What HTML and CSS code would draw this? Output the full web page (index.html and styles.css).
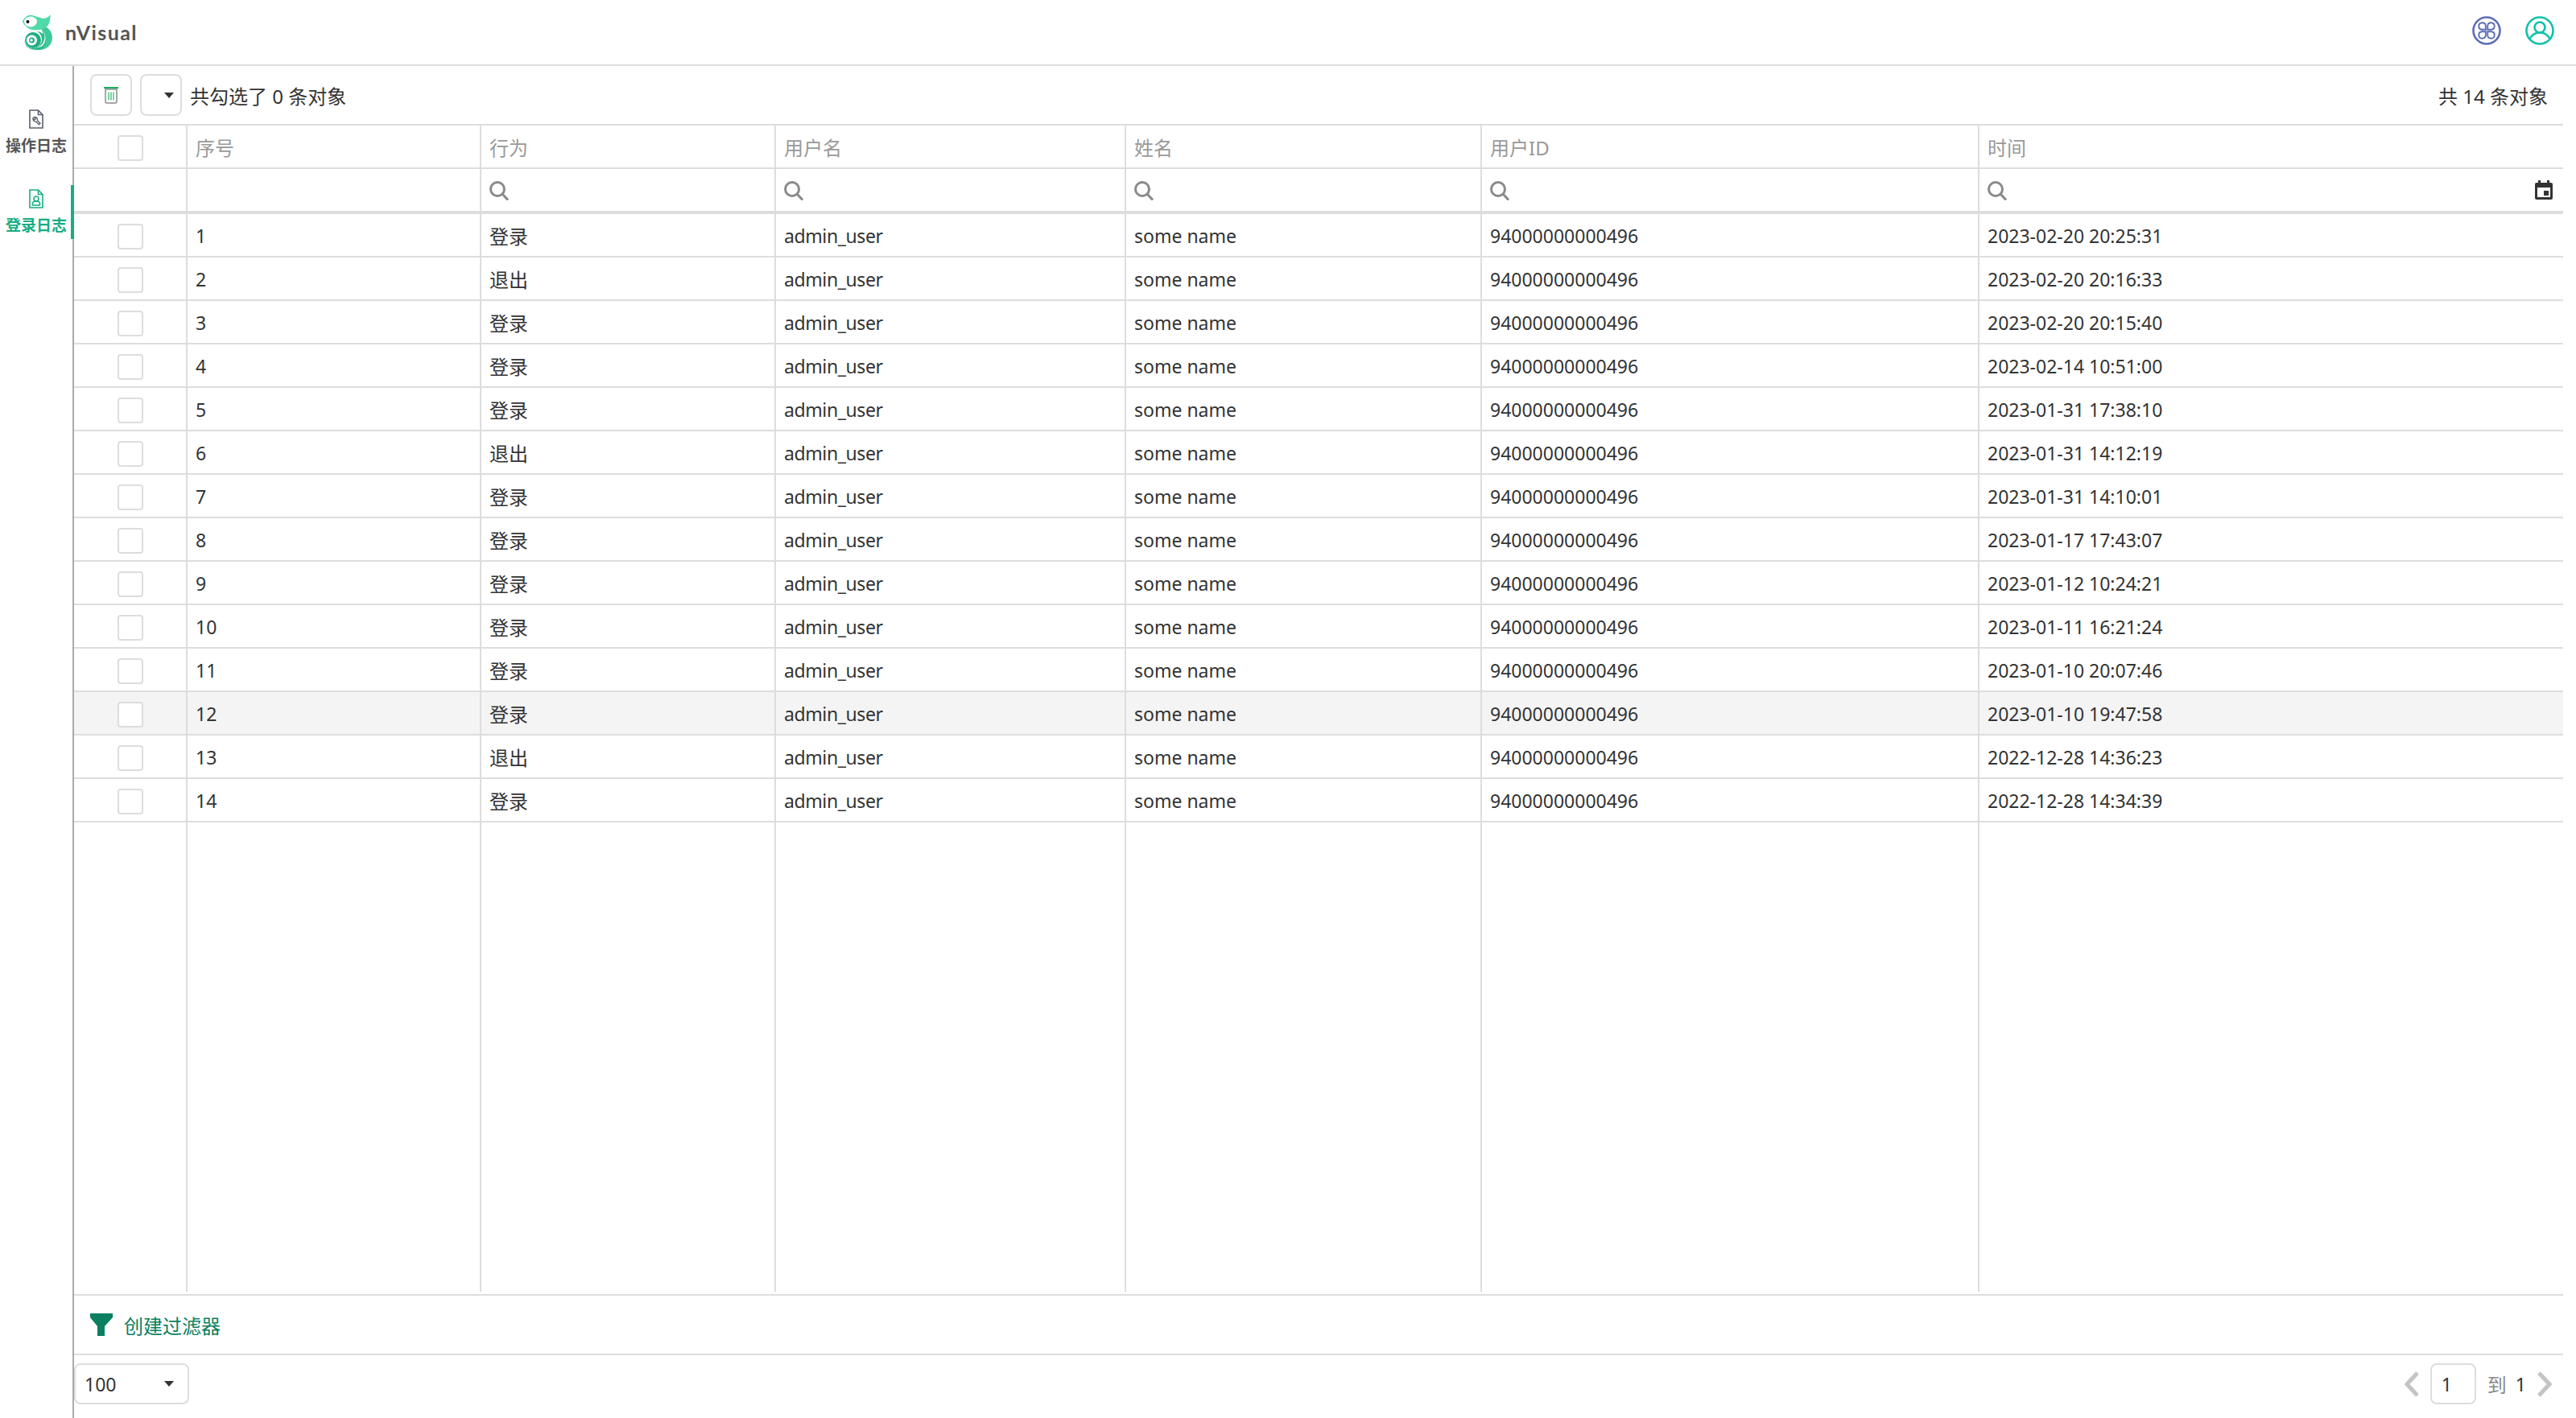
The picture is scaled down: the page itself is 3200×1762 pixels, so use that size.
FILE: index.html
```html
<!DOCTYPE html>
<html lang="zh-CN">
<head>
<meta charset="utf-8">
<title>nVisual</title>
<link rel="stylesheet" href="styles.css">
</head>
<body>
<svg class="defs" width="0" height="0" aria-hidden="true">
  <symbol id="search" viewBox="0 0 24 24">
    <circle cx="10" cy="10" r="8.500" fill="none" stroke="currentColor" stroke-width="3"/>
    <path d="M16 16 23 23.500" fill="none" stroke="currentColor" stroke-width="3"/>
  </symbol>
  <symbol id="caret" viewBox="0 0 12 7">
    <path d="M0 0h12L6 7z" fill="currentColor"/>
  </symbol>
</svg>
<div class="app">
  <header class="topbar">
    <div class="brand">
      <svg class="logo" viewBox="0 0 38 44" width="38" height="44">
        <path d="M22 14c9-1 16 6 16 15 0 9-8 15-16 15-5 0-9-1-12-4 9 2 17-3 17-11 0-6-2-11-5-15z" fill="#3ec99b"/>
        <path d="M22 44c-8 0-14-1-17-6-3-5-2-12 3-15 5-3 12-3 17 0 4 3 6 9 4 14-1 3-4 6-7 7z" fill="#27b98a"/>
        <path d="M27 21c2 4 2 9 0 13-2 4-5 6-8 7 5 0 9-3 10-8 1-4 0-9-2-12z" fill="#fff"/>
        <circle cx="14" cy="31" r="11" fill="#fff"/>
        <circle cx="14" cy="32" r="10" fill="#1fae85"/>
        <circle cx="12.500" cy="32" r="6.500" fill="#fff"/>
        <circle cx="12.500" cy="32" r="3.500" fill="#1fae85"/>
        <circle cx="12" cy="32" r="1.800" fill="#fff"/>
        <path d="M1 9C3 3 8 0 13 1c5 1 9 3 13 4 3 0 7-1 10-5-1 6-1 10-3 13-3 4-8 6-13 6-8 1-14-1-19-10z" fill="#4edba9"/>
        <ellipse cx="11" cy="9" rx="8" ry="6.500" fill="#fff"/>
        <circle cx="7.500" cy="9" r="2" fill="#111"/>
      </svg>
      <span class="brand-name">nVisual</span>
    </div>
    <div class="top-actions">
      <svg class="top-icon" viewBox="0 0 36 36" width="36" height="36">
        <circle cx="18" cy="18" r="16.500" fill="none" stroke="#5d6db5" stroke-width="2.600"/>
        <g fill="none" stroke="#5d6db5" stroke-width="1.900">
          <path d="M16.800 16.800h-5a4.300 4.300 0 1 1 5-5z"/>
          <path d="M19.200 16.800h5a4.300 4.300 0 1 0-5-5z"/>
          <path d="M16.800 19.200h-5a4.300 4.300 0 1 0 5 5z"/>
          <path d="M19.200 19.200h5a4.300 4.300 0 1 1-5 5z"/>
        </g>
      </svg>
      <svg class="top-icon" viewBox="0 0 36 36" width="36" height="36">
        <circle cx="18" cy="18" r="16.500" fill="none" stroke="#10c2a9" stroke-width="2.600"/>
        <circle cx="18" cy="14" r="6.500" fill="none" stroke="#10c2a9" stroke-width="2.600"/>
        <path d="M5 29c3-6 8-8.500 13-8.500S28 23 31 29" fill="none" stroke="#10c2a9" stroke-width="2.600"/>
      </svg>
    </div>
  </header>
  <div class="main">
    <nav class="sidebar">
      <a class="nav-item">
        <svg viewBox="0 0 18 24" width="18" height="24">
          <path d="M1 1h10.500L17 6.500V23H1z M11.500 1v5.500H17" fill="none" stroke="#5b5f6b" stroke-width="1.600"/>
          <path d="M6 9.500a3.500 3.500 0 0 1 4.500 4.200l3.500 3.500-1.600 1.600-3.500-3.500A3.500 3.500 0 0 1 5 11l2 2 1.500-1.500z" fill="none" stroke="#5b5f6b" stroke-width="1.300"/>
        </svg>
        <span>操作日志</span>
      </a>
      <a class="nav-item active">
        <svg viewBox="0 0 18 24" width="18" height="24">
          <path d="M1 1h10.500L17 6.500V23H1z M11.500 1v5.500H17" fill="none" stroke="#17ad83" stroke-width="1.600"/>
          <circle cx="9" cy="12" r="3" fill="none" stroke="#17ad83" stroke-width="1.500"/>
          <path d="M4.500 20v-2c0-2 2-3 4.500-3s4.500 1 4.500 3v2z" fill="none" stroke="#17ad83" stroke-width="1.500"/>
        </svg>
        <span>登录日志</span>
      </a>
    </nav>
    <section class="content">
      <div class="toolbar">
        <div class="toolbar-left">
          <button class="btn" type="button">
            <svg viewBox="0 0 18 22" width="18" height="22">
              <path d="M0 2h18" stroke="#17ad5f" stroke-width="2"/>
              <path d="M2 4h14v15a2 2 0 0 1-2 2H4a2 2 0 0 1-2-2z" fill="none" stroke="#8a8a8a" stroke-width="1.500"/>
              <path d="M6 7.500v10M9 7.500v10M12 7.500v10" stroke="#3fbf77" stroke-width="1.400"/>
            </svg>
          </button>
          <button class="btn btn-caret" type="button">
            <svg class="caret" width="12" height="7"><use href="#caret"/></svg>
          </button>
          <span class="count">共勾选了 0 条对象</span>
        </div>
        <span class="count total">共 14 条对象</span>
      </div>
      <div class="table">
        <div class="row head">
          <div class="cell check"><i class="box"></i></div>
          <div class="cell">序号</div><div class="cell">行为</div><div class="cell">用户名</div><div class="cell">姓名</div><div class="cell">用户ID</div><div class="cell">时间</div>
        </div>
        <div class="row filters">
          <div class="cell check"></div>
          <div class="cell"></div>
          <div class="cell"><svg class="search" width="24" height="24"><use href="#search"/></svg></div>
          <div class="cell"><svg class="search" width="24" height="24"><use href="#search"/></svg></div>
          <div class="cell"><svg class="search" width="24" height="24"><use href="#search"/></svg></div>
          <div class="cell"><svg class="search" width="24" height="24"><use href="#search"/></svg></div>
          <div class="cell cell-date">
            <svg class="search" width="24" height="24"><use href="#search"/></svg>
            <svg class="calendar" viewBox="0 0 22 24" width="22" height="24">
              <path d="M4 0h3v3h8V0h3v3h2a2 2 0 0 1 2 2v17a2 2 0 0 1-2 2H2a2 2 0 0 1-2-2V5a2 2 0 0 1 2-2h2z" fill="#333"/>
              <rect x="3" y="9" width="16" height="12" fill="#fff"/>
              <rect x="11" y="13" width="6" height="6" fill="#333"/>
            </svg>
          </div>
        </div>
        <div class="row"><div class="cell check"><i class="box"></i></div><div class="cell">1</div><div class="cell action">登录</div><div class="cell user">admin_user</div><div class="cell">some name</div><div class="cell">94000000000496</div><div class="cell">2023-02-20 20:25:31</div></div>
        <div class="row"><div class="cell check"><i class="box"></i></div><div class="cell">2</div><div class="cell action">退出</div><div class="cell user">admin_user</div><div class="cell">some name</div><div class="cell">94000000000496</div><div class="cell">2023-02-20 20:16:33</div></div>
        <div class="row"><div class="cell check"><i class="box"></i></div><div class="cell">3</div><div class="cell action">登录</div><div class="cell user">admin_user</div><div class="cell">some name</div><div class="cell">94000000000496</div><div class="cell">2023-02-20 20:15:40</div></div>
        <div class="row"><div class="cell check"><i class="box"></i></div><div class="cell">4</div><div class="cell action">登录</div><div class="cell user">admin_user</div><div class="cell">some name</div><div class="cell">94000000000496</div><div class="cell">2023-02-14 10:51:00</div></div>
        <div class="row"><div class="cell check"><i class="box"></i></div><div class="cell">5</div><div class="cell action">登录</div><div class="cell user">admin_user</div><div class="cell">some name</div><div class="cell">94000000000496</div><div class="cell">2023-01-31 17:38:10</div></div>
        <div class="row"><div class="cell check"><i class="box"></i></div><div class="cell">6</div><div class="cell action">退出</div><div class="cell user">admin_user</div><div class="cell">some name</div><div class="cell">94000000000496</div><div class="cell">2023-01-31 14:12:19</div></div>
        <div class="row"><div class="cell check"><i class="box"></i></div><div class="cell">7</div><div class="cell action">登录</div><div class="cell user">admin_user</div><div class="cell">some name</div><div class="cell">94000000000496</div><div class="cell">2023-01-31 14:10:01</div></div>
        <div class="row"><div class="cell check"><i class="box"></i></div><div class="cell">8</div><div class="cell action">登录</div><div class="cell user">admin_user</div><div class="cell">some name</div><div class="cell">94000000000496</div><div class="cell">2023-01-17 17:43:07</div></div>
        <div class="row"><div class="cell check"><i class="box"></i></div><div class="cell">9</div><div class="cell action">登录</div><div class="cell user">admin_user</div><div class="cell">some name</div><div class="cell">94000000000496</div><div class="cell">2023-01-12 10:24:21</div></div>
        <div class="row"><div class="cell check"><i class="box"></i></div><div class="cell">10</div><div class="cell action">登录</div><div class="cell user">admin_user</div><div class="cell">some name</div><div class="cell">94000000000496</div><div class="cell">2023-01-11 16:21:24</div></div>
        <div class="row"><div class="cell check"><i class="box"></i></div><div class="cell">11</div><div class="cell action">登录</div><div class="cell user">admin_user</div><div class="cell">some name</div><div class="cell">94000000000496</div><div class="cell">2023-01-10 20:07:46</div></div>
        <div class="row hover"><div class="cell check"><i class="box"></i></div><div class="cell">12</div><div class="cell action">登录</div><div class="cell user">admin_user</div><div class="cell">some name</div><div class="cell">94000000000496</div><div class="cell">2023-01-10 19:47:58</div></div>
        <div class="row"><div class="cell check"><i class="box"></i></div><div class="cell">13</div><div class="cell action">退出</div><div class="cell user">admin_user</div><div class="cell">some name</div><div class="cell">94000000000496</div><div class="cell">2022-12-28 14:36:23</div></div>
        <div class="row"><div class="cell check"><i class="box"></i></div><div class="cell">14</div><div class="cell action">登录</div><div class="cell user">admin_user</div><div class="cell">some name</div><div class="cell">94000000000496</div><div class="cell">2022-12-28 14:34:39</div></div>
        <div class="row filler"><div class="cell"></div><div class="cell"></div><div class="cell"></div><div class="cell"></div><div class="cell"></div><div class="cell"></div><div class="cell"></div></div>
      </div>
      <div class="filter-bar">
        <svg viewBox="0 0 28 28" width="28" height="28"><path d="M0 0h28v5L18 16v12H9V16L0 5z" fill="#0a8060"/></svg>
        <span>创建过滤器</span>
      </div>
      <div class="pager-bar">
        <div class="select"><span>100</span><svg class="caret" width="12" height="7"><use href="#caret"/></svg></div>
        <div class="pager">
          <svg viewBox="0 0 18 32" width="18" height="32"><path d="M16 2 3 16l13 14" fill="none" stroke="#c4c4c4" stroke-width="5"/></svg>
          <div class="page-input">1</div>
          <span class="page-to">到</span>
          <span class="page-total">1</span>
          <svg viewBox="0 0 18 32" width="18" height="32"><path d="M2 2l13 14L2 30" fill="none" stroke="#c4c4c4" stroke-width="5"/></svg>
        </div>
      </div>
    </section>
  </div>
</div>
</body>
</html>
```
FILE: styles.css
```css
* { box-sizing: border-box; }
html, body { margin: 0; height: 100%; background: #fff; overflow: hidden; }
body {
  font-family: "Noto Sans", "Noto Sans CJK SC", sans-serif;
  font-size: 23px;
  color: #333;
}
.defs { position: absolute; }
.app { height: 1762px; display: flex; flex-direction: column; }

.topbar {
  height: 82px;
  flex: none;
  border-bottom: 2px solid #ddd;
  display: flex;
  align-items: center;
  justify-content: space-between;
  padding: 0 27px;
}
.brand { display: flex; align-items: center; gap: 16px; margin-top: -1px; }
.brand-name {
  font-family: "Lato", sans-serif;
  font-weight: 700;
  font-size: 25px;
  letter-spacing: 1.4px;
  color: #555;
}
.top-actions { display: flex; gap: 30px; margin-bottom: 4px; }
.top-icon { display: block; }

.main { flex: 1; display: flex; min-height: 0; }
.sidebar {
  width: 92px;
  flex: none;
  border-right: 2px solid #aaa;
  position: relative;
  padding-top: 54px;
  display: flex;
  flex-direction: column;
  gap: 39px;
}
.nav-item {
  display: flex;
  flex-direction: column;
  align-items: center;
  gap: 6px;
  height: 60px;
  color: #555;
  font-family: "Noto Sans CJK SC", sans-serif;
  font-weight: 700;
  font-size: 19px;
  line-height: 28px;
  white-space: nowrap;
}
.nav-item.active { color: #17ad83; }
.nav-item.active::after {
  content: "";
  position: absolute;
  right: -2px;
  top: 148px;
  width: 4px;
  height: 67px;
  background: #17ad83;
}

.content { flex: 1; min-width: 0; display: flex; flex-direction: column; padding-right: 16px; }
.toolbar {
  height: 74px;
  flex: none;
  border-bottom: 2px solid #ddd;
  display: flex;
  align-items: center;
  justify-content: space-between;
  padding: 0 19px 0 20px;
}
.toolbar-left { display: flex; align-items: center; gap: 10px; }
.btn {
  width: 52px;
  height: 52px;
  padding: 0;
  background: #fff;
  border: 2px solid #ddd;
  border-radius: 8px;
  display: flex;
  align-items: center;
  justify-content: center;
}
.btn-caret { justify-content: flex-end; padding-right: 8px; }
.caret { color: #333; display: block; }
.count { font-size: 24px; color: #333; }

.table { flex: 1; min-height: 0; display: flex; flex-direction: column; margin-bottom: 3px; }
.row {
  display: grid;
  grid-template-columns: 141px 365px 366px 435px 442px 618px 1fr;
  height: 54px;
  flex: none;
  border-bottom: 2px solid #ddd;
}
.row.hover { background: #f4f4f4; }
.row.filters { height: 56px; border-bottom-width: 4px; }
.row.filler { flex: 1; border-bottom: 0; }
.cell {
  border-right: 2px solid #ddd;
  padding-left: 10px;
  padding-top: 1px;
  display: flex;
  align-items: center;
  white-space: nowrap;
  min-width: 0;
}
.cell:last-child { border-right: 0; }
.head .cell { color: #999; font-size: 24px; padding-top: 0; }
.action { font-size: 24px; }
.user { letter-spacing: -0.4px; }
.row .check { padding-left: 54px; padding-top: 4px; }
.box {
  display: block;
  width: 32px;
  height: 32px;
  background: #fff;
  border: 2px solid #ddd;
  border-radius: 4px;
}
.search { color: #8a8a8a; display: block; }
.cell-date { justify-content: space-between; padding-right: 13px; }
.calendar { display: block; margin-top: -2px; }

.filter-bar {
  height: 76px;
  flex: none;
  border-top: 2px solid #ddd;
  border-bottom: 2px solid #ddd;
  display: flex;
  align-items: center;
  gap: 14px;
  padding-left: 20px;
  color: #0a8060;
  font-size: 24px;
}
.pager-bar {
  height: 78px;
  flex: none;
  display: flex;
  align-items: center;
  justify-content: space-between;
  padding-bottom: 7px;
  padding-right: 14px;
}
.select {
  width: 143px;
  height: 51px;
  border: 2px solid #ddd;
  border-radius: 8px;
  display: flex;
  align-items: center;
  justify-content: space-between;
  padding: 0 17px 0 11px;
}
.pager { display: flex; align-items: center; gap: 14px; }
.page-input {
  width: 57px;
  height: 51px;
  border: 2px solid #ddd;
  border-radius: 8px;
  display: flex;
  align-items: center;
  padding-left: 12px;
}
.page-to { color: #888; font-size: 24px; }
.page-total { margin-left: -3px; }
```
